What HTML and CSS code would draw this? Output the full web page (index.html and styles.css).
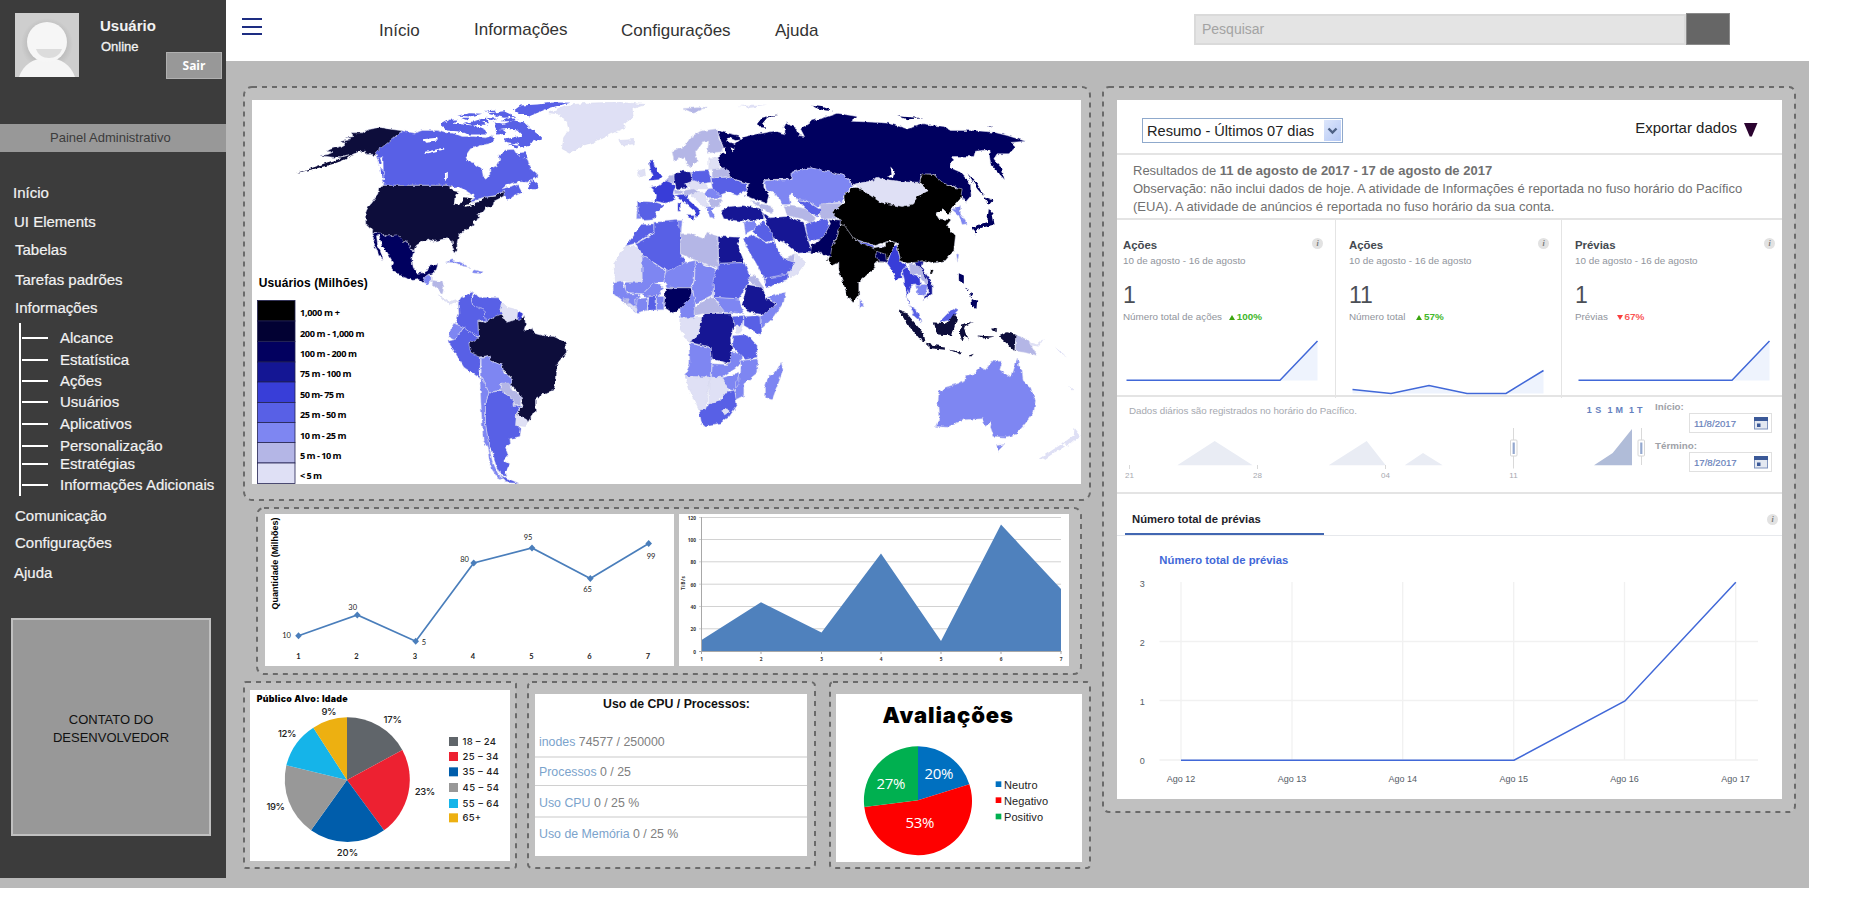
FILE: index.html
```html
<!DOCTYPE html>
<html lang="pt-BR">
<head>
<meta charset="utf-8">
<title>Painel Administrativo</title>
<link rel="stylesheet" href="styles.css">
</head>
<body>
<div class="app">
  <aside class="sidebar">
    <div class="profile">
      <svg class="avatar" viewBox="0 0 64 64">
        <defs><radialGradient id="av"><stop offset=".72" stop-color="#a8a8a8"/><stop offset="1" stop-color="#cecece"/></radialGradient></defs>
        <rect width="64" height="64" fill="#cecece"/>
        <circle cx="32" cy="31" r="26" fill="url(#av)" opacity=".45"/>
        <path d="M4 64C8 52 18 45 32 45S56 52 60 64Z" fill="#f5f5f5"/>
        <circle cx="32" cy="29" r="20" fill="#f6f6f6"/>
        <path d="M21 36H47C45 42 40 45 34 45S23 42 21 36Z" fill="#dcdcdc"/>
      </svg>
      <div class="who"><div class="name">Usuário</div><div class="state">Online</div></div>
      <button class="logout">Sair</button>
    </div>
    <div class="band">Painel Administrativo</div>
    <ul class="menu">
      <li class="m1">Início</li><li class="m2">UI Elements</li><li class="m3">Tabelas</li><li class="m4">Tarefas padrões</li>
      <li class="m5">Informações
        <ul class="sub">
          <li class="s1">Alcance</li><li class="s2">Estatística</li><li class="s3">Ações</li><li class="s4">Usuários</li><li class="s5">Aplicativos</li><li class="s6">Personalização</li><li class="s7">Estratégias</li><li class="s8">Informações Adicionais</li>
        </ul>
      </li>
      <li class="m6">Comunicação</li><li class="m7">Configurações</li><li class="m8">Ajuda</li>
    </ul>
    <div class="contact">CONTATO DO<br>DESENVOLVEDOR</div>
  </aside>

  <header class="topbar">
    <div class="burger"><i></i><i></i><i></i></div>
    <nav class="nav"><a class="n1">Início</a><a class="n2">Informações</a><a class="n3">Configurações</a><a class="n4">Ajuda</a></nav>
    <div class="search"><div class="search-box">Pesquisar</div><div class="search-btn"></div></div>
  </header>

  <main class="main">
    <div class="left">
      <section class="panel p-map">
        <svg class="frame"><rect rx="8"/></svg>
        <svg class="sheet" viewBox="252 100 829 384" width="829" height="384">
          <defs><filter id="coast" x="0" y="0" width="100%" height="100%"><feTurbulence type="fractalNoise" baseFrequency=".22" numOctaves="2" seed="4"/><feDisplacementMap in="SourceGraphic" scale="4" xChannelSelector="R" yChannelSelector="G"/></filter></defs>
          <g filter="url(#coast)">
          <g class="land" transform="translate(240.5 80.5) scale(.33333)">
            <g class="k2">
              <path d="M485 151 450 146 418 141 385 147 365 157 335 157 337 168 318 172 328 178 297 184 318 188 302 198 270 206 258 213 280 214 262 222 240 225 275 230 300 232 330 224 355 214 372 212 375 221 405 222 425 205Z"/>
              <path class="ns" d="M340 224 300 234 262 245 225 259 165 278 230 263 280 250 312 238Z"/>
              <path d="M434 314H620L650 325 678 327 655 334 644 350 640 372 660 348 685 342 700 345 690 370 720 362 735 350 765 347 780 333 790 330 793 345 775 355 760 362 758 375 735 382 725 395 712 400 718 412 700 420 698 435 672 450 655 465 650 485 650 510 644 518 637 500 635 480 620 475 600 478 582 482 565 478 545 483 527 495 520 510 510 505 500 482 488 485 475 475 468 465 440 467 420 460 398 455 385 440 376 432 374 400 385 375 412 340 415 322Z"/>
              <path d="M712 722 735 726 760 710 780 698 795 720 845 715 852 705 855 735 850 750 875 745 880 758 905 765 940 768 975 785 978 815 950 850 947 900 940 930 915 937 885 957 885 990 862 1025 830 1000 847 970 840 945 812 915 812 890 788 870 785 855 750 840 745 825 715 830 690 818 682 795 700 775 714 770Z"/>
            </g>
            <g class="k6">
              <path d="M485 151 520 158 545 150 590 150 610 157 640 158 665 168 700 168 735 172 755 165 760 178 745 190 720 195 690 205 676 225 680 240 700 248 715 257 724 265 728 290 738 296 748 280 748 265 770 255 778 240 775 225 790 215 800 208 820 207 828 220 838 232 862 235 870 262 890 280 888 292 862 305 830 304 800 312 785 325 812 318 828 310 835 318 845 336 800 357 790 345 793 330 780 333 765 345 735 350 715 355 690 368 704 348 675 330 650 325 620 314H434L425 300 432 280 415 255 408 225 405 215 440 188Z"/>
              <path class="ns" d="M862 322 875 298 892 312 895 326 875 326ZM755 125 790 130 820 120 850 125 870 145 890 160 905 175 890 182 880 178 868 195 845 202 830 190 800 185 790 178 815 172 845 165 830 150 800 145 770 150ZM598 133 625 118 648 117 640 130 700 135 735 150 740 162 690 162 650 152 620 150ZM820 90 840 75 890 72 940 66 990 67 955 75 920 85 895 95 865 108 840 100ZM650 105 690 98 725 100 690 108ZM700 122 735 112 770 115 745 125ZM740 98 790 92 825 108 790 112ZM780 122 800 112 835 116 810 122ZM830 218 855 215 862 232 840 236ZM670 128 715 120 740 132 700 134ZM765 148 790 150 800 160 770 162ZM660 112 688 112 680 119ZM728 92 765 86 758 94ZM802 190 835 196 826 204Z"/>
              <path d="M653 665 662 650 700 632 692 655 697 675 730 680 735 720 712 722 714 770 690 757 665 740 645 727 655 700Z"/>
              <path d="M692 655 705 640 715 650 770 652 785 665 778 690 785 700 760 710 735 726 730 685 697 676Z"/>
              <path d="M668 740 690 757 714 772 685 790 690 815 720 830 718 893 670 860 640 810 622 782 640 778 655 760Z"/>
              <path d="M745 937 778 930 818 955 818 975 842 973 828 1000 828 1030 842 1045 838 1068 808 1075 810 1090 795 1100 803 1125 790 1140 808 1150 795 1175 800 1185 780 1180 765 1150 755 1110 745 1095 735 1030 735 970ZM780 1185 835 1208 800 1207Z"/>
            </g>
            <path class="k3" d="M396 456 420 458 440 467 468 463 480 470 488 485 500 480 510 507 520 512 514 535 518 560 528 578 550 577 562 570 565 557 592 552 588 566 575 580 563 582 555 590 548 607 535 597 518 600 490 590 462 572 452 558 457 545 440 515 425 500 420 480 416 464 408 466 412 495 420 510 428 537 416 528 408 505 398 490 402 475Z"/>
            <path class="k7" d="M548 607 552 590 562 583 572 586 572 600 560 612ZM615 545 635 538 660 545 688 561 665 556 645 547ZM700 568 728 574 722 580 695 577ZM640 728 668 740 655 760 640 778 625 770 630 745ZM722 832 745 825 750 840 785 855 790 878 810 890 812 915 780 912 778 928 745 937 730 900 722 890ZM718 892 730 900 745 937 735 970 735 1030 745 1095 755 1140 775 1185 800 1205 770 1190 750 1160 740 1100 728 1080 722 980Z"/>
            <path class="k8" d="M572 600 605 603 610 620 606 640 595 630 585 620 575 612ZM778 928 785 908 805 908 815 930 842 945 840 972 818 972 818 955Z"/>
            <path class="k9" d="M594 643 610 655 625 665 645 658 658 668 640 665 628 673 610 662ZM785 665 800 680 830 688 832 715 800 725 785 700 778 690ZM828 998 862 1020 855 1038 825 1035ZM925 97 975 75 1040 68 1130 65 1215 72 1175 85 1178 110 1150 130 1155 140 1110 160 1060 185 1025 195 990 218 965 205 970 170 985 150 980 120 950 100ZM1135 180 1180 177 1178 190 1150 195 1138 188Z"/>
            <path class="k5" d="M832 690 848 700 838 720 830 712Z"/>
            <path class="sea" d="M545 176 590 172 592 180 555 184ZM550 215 610 202 612 206 560 218ZM613 280 622 274 622 295 615 302ZM625 322 650 318 680 330 660 335 635 330ZM640 372 655 345 700 340 702 355 672 350 655 375ZM668 375 705 366 702 372 675 379ZM735 110 750 140 740 165 760 158 765 130ZM410 228 428 232 430 300 420 290Z"/>
            <path class="k6 ns" d="M410 232 418 230 424 250 416 246ZM420 262 428 268 430 290 422 282Z"/>
          </g>
          <g class="land" transform="translate(640.5 80.5) scale(.33333)">
            <path class="k3" d="M230 150 295 165 298 178 285 180 265 172 258 182 285 190 305 172 325 165 400 152 435 160 430 140 440 125 470 145 475 165 492 168 480 145 515 120 550 112 590 98 650 108 630 122 700 125 745 128 800 145 850 130 910 138 930 150 1000 150 1060 155 1100 165 1155 182 1110 186 1125 200 1105 220 1070 220 1060 235 1085 265 1092 298 1050 250 1045 208 1005 212 1000 228 938 228 930 262 960 275 990 310 992 345 975 365 962 345 950 320 900 305 880 280 842 282 838 305 790 305 725 295 700 298 690 305 640 312 610 285 570 275 510 262 455 275 455 295 370 298 370 320 385 345 378 370 315 345 325 310 265 290 268 285 232 250 232 230 250 212 248 200Z"/>
            <path class="k3 ns" d="M350 130 365 112 415 100 380 112 365 130 378 142 360 140ZM512 76 550 80 582 92 540 88ZM770 107 850 113 800 116ZM980 278 1010 310 1030 348 1010 325ZM1040 138 1058 138 1048 142Z"/>
            <path class="sea" d="M750 258 762 272 757 290 740 292 753 280ZM555 335 590 333 570 342ZM245 205 255 200 256 222 247 218ZM270 200 282 206 276 215Z"/>
            <g class="k7">
              <path d="M370 300 455 297 455 275 510 262 570 275 610 285 640 315 610 345 605 365 560 368 530 380 500 360 470 358 456 340 445 345 450 372 425 372 405 340 378 330Z"/>
              <path d="M-10 372 5 375 2 415-12 415ZM200 325 235 322 245 350 205 355 190 340ZM195 378 225 378 215 390 225 415 208 410ZM310 425 345 420 350 440 315 460ZM105 420 125 420 122 455 110 445Z"/>
              <path d="M0 520 75 572 70 605 40 610 10 640-45 635-45 605 5 605ZM75 572 135 545 165 540 160 600 150 622 80 620 70 605ZM165 540 228 568 215 645 165 670 155 620 162 600ZM222 650 295 655 310 700 250 695ZM380 650 435 635 430 665 400 710 360 748 358 708 408 672ZM155 630 165 665 160 712 120 712 118 685Z"/>
              <path d="M-82 605-55 600-40 640 0 640-10 660-15 697-60 655-82 640ZM5 640 40 605 70 620 55 645 10 650ZM48 645H70V688H48ZM-15 655 22 652 20 690-12 697Z"/>
              <path d="M145 788 212 802 215 835 212 890 135 888 148 845ZM215 850 265 852 270 815 305 820 300 850 245 890 213 890ZM302 840 352 835 352 875 310 910 310 945 285 958 285 905 300 880ZM245 892 295 878 295 910 280 932 262 925ZM422 845 428 870 395 958 375 952 375 915 385 885 405 875Z"/>
              <path d="M825 615 862 610 855 645 832 642ZM935 388 960 375 960 400 980 430 965 432 955 405ZM658 655 670 675 658 685ZM948 520 955 522 951 545Z"/>
              <path d="M885 1038 895 1015 892 970 895 935 910 922 950 910 972 902 975 885 1000 880 1020 860 1035 868 1055 842 1085 842 1078 868 1112 892 1122 860 1130 830 1136 860 1145 870 1148 900 1170 920 1185 960 1180 995 1150 1035 1125 1062 1095 1070 1060 1068 1050 1040 1053 1022 1035 1038 1025 1015 970 1018 920 1040ZM1068 1095 1092 1092 1072 1112Z"/>
            </g>
            <g class="k6">
              <path d="M-10 362 45 365 70 373 50 395 40 418 10 420-5 400ZM152 272 205 270 212 305 180 310 155 300ZM212 292 260 290 320 310 320 330 290 345 260 335 235 345 215 320ZM470 358 500 362 535 385 560 378 545 395 530 410 495 385ZM495 430 530 420 560 415 568 435 545 475 505 482 498 455ZM345 440 370 420 395 455 400 480 375 485 335 455ZM308 475 335 462 380 488 400 485 430 535 465 545 455 575 420 588 370 592 345 545 320 505ZM370 595 445 578 440 600 378 622Z"/>
              <path d="M40 425 110 420 120 460 120 520 135 545 80 572 0 520-15 490 40 460ZM0 432 40 430 40 455-15 488-45 497-20 465ZM235 548 312 547 330 590 310 630 295 655 220 650 218 600ZM310 708 358 705 362 765 310 735ZM278 708 310 705 305 735 278 738ZM280 765 320 762 350 795 350 830 315 838 275 800ZM25 645 47 645 47 688 22 690ZM175 988 198 985 205 970 238 962 262 932 282 930 290 975 265 1010 240 1028 190 1037 182 1025Z"/>
              <path d="M808 675 830 690 842 725 822 708ZM895 725 935 685 955 690 925 720Z"/>
              <path d="M642 475 700 495 700 507 645 488Z"/>
            </g>
            <path class="k5" d="M25 240 38 238 42 255 50 270 63 288 55 298 25 300 38 285 30 268ZM85 300 105 318 98 340 102 360 75 368 45 362 48 340 28 320 55 315 75 300ZM100 345 145 338 140 355 175 385 178 400 164 412 165 395 120 355ZM112 367H120V392H112ZM138 405 162 405 158 418ZM740 548 755 505 768 492 780 540 800 558 785 570 785 595 765 598 755 570ZM785 565 800 560 820 585 838 590 840 612 810 615 800 650 812 680 802 665 795 620Z"/>
            <path class="k4" d="M100 285 120 270 150 275 155 300 140 325 108 325 100 300ZM365 395 385 412 440 408 490 425 500 470 515 515 470 518 430 485 400 475 380 430ZM240 392 265 378 310 375 365 385 370 415 300 422 250 415ZM232 468 300 470 290 490 312 545 235 548ZM320 612 365 620 380 655 408 672 370 703 325 695 305 670ZM190 698 275 700 280 735 270 775 275 805 265 850 215 835 212 800 145 785 170 770ZM820 542 850 540 845 560 875 610 875 640 850 658 865 630 860 600 830 560Z"/>
            <path class="k8" d="M75 300 95 280 100 285 102 310ZM215 265 255 262 270 288 215 292ZM130 330 160 325 175 335 130 345ZM205 358 243 355 240 375 210 378ZM95 212 135 195 150 170 180 152 230 145 235 175 248 200 242 214 200 218 205 182 190 182 165 215 170 240 150 262 138 250 132 230 100 240ZM430 375 460 378 495 385 525 412 510 430 485 415 440 405ZM540 370 605 368 580 395 590 415 540 415ZM330 362 395 378 395 400 365 385ZM430 535 462 520 460 545ZM120 460 150 460 190 475 200 455 232 468 233 565 155 535 120 520ZM325 590 345 585 372 625 330 610ZM160 680 215 648 250 690 245 695 185 700 162 705ZM805 548 835 555 862 600 855 615 838 585 810 580ZM1125 762 1165 780 1190 825 1150 815 1125 812ZM-52 655-38 655-36 672-50 670ZM100 328 128 332 124 340 102 340ZM128 84 200 80 160 98Z"/>
            <path class="k9" d="M-5 272 12 265 15 285-5 290ZM205 232 235 232 238 260 205 268ZM135 310 160 300 200 315 198 325 150 325ZM150 340 190 335 205 375 192 382ZM645 310 700 300 710 290 725 298 790 305 835 308 865 330 830 345 820 370 785 378 720 365 690 345 655 325ZM705 495H730V505H705ZM445 575 465 545 465 520 495 545 470 580 450 592ZM-45 497-15 497 5 520 5 605-75 600-80 550ZM118 715 185 710 170 770 145 785 118 745ZM-42 672-32 668-10 685-12 697ZM135 888 215 890 205 905 198 985 175 988 150 935ZM205 895 243 892 265 928 235 960 205 970ZM247 990 260 985 266 995 252 1003ZM288 740 306 735 300 755 288 755Z"/>
            <path class="k1" d="M635 320 655 322 690 345 720 365 785 378 820 370 830 347 865 330 838 305 845 280 880 282 905 305 940 320 965 325 960 355 940 378 925 400 910 385 886 400 895 415 932 418 918 435 945 465 940 510 915 540 880 548 850 540 830 545 800 548 780 540 770 490 750 480 705 495 640 475 600 430 595 418 575 395 612 365 610 345 640 320ZM868 567 880 565 876 578 867 577Z"/>
            <path class="k1" d="M595 432 612 435 640 475 700 505 735 498 735 485 765 485 745 530 735 545 705 545 700 565 655 605 655 645 638 667 620 645 595 570 595 545 575 555 560 540 575 495 592 465Z"/>
            <path class="k3" d="M75 622 155 622 150 650 120 685 98 698 70 680ZM510 518 515 490 545 475 570 430 565 418 600 422 592 465 575 495 570 525 550 528 540 512ZM705 512 735 520 738 545 712 542Z"/>
            <path class="k3 ns" d="M955 578 970 585 970 610 955 600ZM990 655 1010 660 1008 685 992 678ZM975 622 985 628 978 634ZM988 635 998 640 992 650ZM1045 385 1056 400 1062 432 1030 440 1008 445 1005 465 993 440 1040 425ZM1030 350 1058 360 1045 372ZM1040 362 1050 370 1040 372Z"/>
            <path class="k2 ns" d="M775 690 800 700 850 760 855 785 835 775 800 730ZM855 790 910 798 915 808 870 803ZM925 808 965 814 962 822ZM880 726 920 728 940 700 950 710 935 765 890 762ZM958 755 962 735 1000 725 970 742 985 780 972 768 965 785ZM1075 768 1100 755 1125 762 1122 812 1100 790ZM1050 745 1070 743 1068 755ZM1010 765 1060 768 1030 774ZM985 825 1000 820 990 830Z"/>
            <path class="k9 ns" d="M1195 1135 1265 1090 1270 1098 1210 1138ZM1265 1090 1300 1064 1302 1042 1320 1065 1285 1095ZM1165 785 1190 792 1210 775 1195 798 1170 795ZM1283 915 1298 928 1294 930ZM1240 798 1280 828 1255 815ZM290 76 380 76 330 82Z"/>
          </g>
          </g>
          <text class="map-title" x="258.700" y="287" textLength="109">Usuários (Milhões)</text>
          <g class="scale">
            <rect class="k1" x="257.500" y="300.500" width="37.500" height="20.500"/><rect class="kl" x="257.500" y="321" width="37.500" height="20.300"/><rect class="k3" x="257.500" y="341.500" width="37.500" height="20.500"/><rect class="k4" x="257.500" y="362" width="37.500" height="20"/><rect class="k5" x="257.500" y="382" width="37.500" height="20.500"/><rect class="k6" x="257.500" y="402.500" width="37.500" height="20"/><rect class="k7" x="257.500" y="422.500" width="37.500" height="20"/><rect class="k8" x="257.500" y="442.500" width="37.500" height="20.500"/><rect class="k9" x="257.500" y="463" width="37.500" height="20.500"/>
          </g>
          <g class="scale-t">
            <text x="300" y="316.300" textLength="40">1,000 m +</text><text x="300" y="336.500" textLength="64.500">200 m - 1,000 m</text><text x="300" y="357" textLength="57">100 m - 200 m</text><text x="300" y="377.300" textLength="51.500">75 m - 100 m</text><text x="300" y="397.700" textLength="44.500">50 m- 75 m</text><text x="300" y="418" textLength="46.500">25 m - 50 m</text><text x="300" y="438.500" textLength="46.500">10 m - 25 m</text><text x="300" y="458.700" textLength="41.500">5 m - 10 m</text><text x="300" y="479" textLength="22">&lt; 5 m</text>
          </g>
        </svg>
      </section>

      <section class="panel p-duo">
        <svg class="frame"><rect rx="7"/></svg>
        <svg class="sheet" viewBox="265 514 409 152" width="409" height="152">
          <text class="ylab" transform="translate(278 609.500) rotate(-90)" textLength="92">Quantidade (Milhões)</text>
          <polyline points="298.500,635.700 357.300,615 415.700,641.300 473.700,563 532,548 590.300,578.500 648.700,543.500" fill="none" stroke="#4a7ebb" stroke-width="1.700"/>
          <g fill="#4a7ebb"><path id="d" d="M298.500 632.200l3.300 3.500-3.300 3.500-3.300-3.500z"/><use href="#d" x="58.800" y="-20.700"/><use href="#d" x="117.200" y="5.600"/><use href="#d" x="175.200" y="-72.700"/><use href="#d" x="233.500" y="-87.700"/><use href="#d" x="291.800" y="-57.200"/><use href="#d" x="350.200" y="-92.200"/></g>
          <g class="pt"><text x="286.500" y="637.500">10</text><text x="352.700" y="610">30</text><text x="424" y="645">5</text><text x="464.500" y="561.500">80</text><text x="528" y="540">95</text><text x="587.500" y="592">65</text><text x="651" y="559">99</text></g>
          <g class="pt dark"><text x="298.500" y="659">1</text><text x="356.500" y="659">2</text><text x="415" y="659">3</text><text x="473" y="659">4</text><text x="531.500" y="659">5</text><text x="589.500" y="659">6</text><text x="648" y="659">7</text></g>
        </svg>
        <svg class="sheet" viewBox="679 514 390 152" width="390" height="152">
          <path d="M699 517.500H1061M699 539.500H1061M699 561.800H1061M699 584.200H1061M699 606.500H1061M699 628.800H1061" stroke="#d2d2d2"/>
          <path d="M701.500 640 761 602.300 821.500 632.500 881 553.500 941 641 1001 524.500 1061 589V651.500H701.500Z" fill="#4f81bd"/>
          <path d="M701.500 517V654M699 651.500H1061.500M761 651V654M821.500 651V654M881 651V654M941 651V654M1001 651V654M1061 651V654" stroke="#a8a8a8" fill="none"/>
          <text class="tiny" transform="translate(684.500 590) rotate(-90)" textLength="14">TiB/s</text>
          <g class="tiny end"><text x="696" y="519.500">120</text><text x="696" y="541.500">100</text><text x="696" y="564">80</text><text x="696" y="586.500">60</text><text x="696" y="608.700">40</text><text x="696" y="631">20</text><text x="696" y="653.700">0</text></g>
          <g class="tiny mid"><text x="701.500" y="661">1</text><text x="761" y="661">2</text><text x="821.500" y="661">3</text><text x="881" y="661">4</text><text x="941" y="661">5</text><text x="1001" y="661">6</text><text x="1061" y="661">7</text></g>
        </svg>
      </section>

      <div class="trio">
        <section class="panel p-age">
          <svg class="frame"><rect rx="2"/></svg>
          <svg class="sheet" viewBox="250 690 260 171" width="260" height="171">
            <g transform="translate(240 670) scale(.33333)">
              <path d="M321 330V142A188 188 0 0 1 487 240Z" fill="#60656a"/><path d="M321 330 487 240A188 188 0 0 1 432 481Z" fill="#ed2131"/><path d="M321 330 432 481A188 188 0 0 1 213 481Z" fill="#005dab"/><path d="M321 330 213 481A188 188 0 0 1 139 286Z" fill="#989898"/><path d="M321 330 139 286A188 188 0 0 1 220 173Z" fill="#15b4e9"/><path d="M321 330 220 173A188 188 0 0 1 321 142Z" fill="#edb011"/>
              <rect x="627" y="201" width="27" height="27" fill="#60656a"/><rect x="627" y="246" width="27" height="27" fill="#ed2131"/><rect x="627" y="292" width="27" height="27" fill="#005dab"/><rect x="627" y="339" width="27" height="27" fill="#989898"/><rect x="627" y="387" width="27" height="27" fill="#15b4e9"/><rect x="627" y="430" width="27" height="27" fill="#edb011"/>
            </g>
            <text class="heavy" x="256.700" y="702.300" textLength="91">Público Alvo: Idade</text>
            <g class="pie-t"><text x="321.500" y="715" textLength="15">9%</text><text x="383.500" y="723" textLength="18.500">17%</text><text x="278" y="737" textLength="18.500">12%</text><text x="414.700" y="795" textLength="20.500">23%</text><text x="266.500" y="810" textLength="18.500">19%</text><text x="336.700" y="856" textLength="21.500">20%</text>
            <text x="462.500" y="745" textLength="33.500">18 – 24</text><text x="462.500" y="760" textLength="36">25 – 34</text><text x="462.500" y="775" textLength="36.500">35 – 44</text><text x="462.500" y="791" textLength="36.500">45 – 54</text><text x="462.500" y="806.500" textLength="36.500">55 – 64</text><text x="462.500" y="821" textLength="18.500">65+</text></g>
          </svg>
        </section>
        <section class="panel p-cpu">
          <svg class="frame"><rect rx="4"/></svg>
          <div class="sheet cpu">
            <h3>Uso de CPU / Processos:</h3>
            <div class="row r1"><b>inodes</b> 74577 / 250000</div>
            <div class="row r2"><b>Processos</b> 0 / 25</div>
            <div class="row r3"><b>Uso CPU</b> 0 / 25 %</div>
            <div class="row r4"><b>Uso de Memória</b> 0 / 25 %</div>
          </div>
        </section>
        <section class="panel p-rate">
          <svg class="frame"><rect rx="3"/></svg>
          <svg class="sheet" viewBox="836 694 246 168" width="246" height="168">
            <g transform="translate(660 670) scale(.33333)">
              <path d="M774 391V229A162 162 0 0 1 928 343Z" fill="#0070c0"/><path d="M774 391 928 343A162 162 0 1 1 613 411Z" fill="#fe0000"/><path d="M774 391 613 411A162 162 0 0 1 774 229Z" fill="#00b050"/>
              <rect x="1007" y="334" width="17" height="17" fill="#0070c0"/><rect x="1007" y="382" width="17" height="17" fill="#fe0000"/><rect x="1007" y="431" width="17" height="17" fill="#00b050"/>
            </g>
            <text class="heavy big" x="882.500" y="722.500" textLength="130.500">Avaliações</text>
            <g class="chalk"><text x="924.500" y="778.500" textLength="29">20%</text><text x="876.500" y="788.500" textLength="29">27%</text><text x="905.500" y="828" textLength="29">53%</text></g>
            <g class="leg"><text x="1004" y="788.500" textLength="33.500">Neutro</text><text x="1004" y="804.500" textLength="44">Negativo</text><text x="1004" y="820.500" textLength="39">Positivo</text></g>
          </svg>
        </section>
      </div>
    </div>

    <section class="panel p-stats">
      <svg class="frame"><rect rx="6"/></svg>
      <div class="sheet stats">
        <div class="bar">
          <div class="select">Resumo - Últimos 07 dias<span class="arrow"><svg width="17" height="21" viewBox="0 0 17 21"><path d="M4.500 8.500l4 4 4-4" fill="none" stroke="#4d6185" stroke-width="2.400"/></svg></span></div>
          <div class="export">Exportar dados<svg width="14" height="14" viewBox="0 0 14 14"><path d="M0 0H13.500L7.800 13.500H5.700Z" fill="#2b0330"/></svg></div>
        </div>
        <p class="note">Resultados de <b>11 de agosto de 2017 - 17 de agosto de 2017</b><br>Observação: não inclui dados de hoje. A atividade de Informações é reportada no fuso horário do Pacífico<br>(EUA). A atividade de anúncios é reportada no fuso horário da sua conta.</p>
        <div class="cards">
          <div class="card first"><h4>Ações<i class="info">i</i></h4><div class="when">10 de agosto - 16 de agosto</div><div class="num">1</div><div class="lab">Número total de ações <span class="up">100%</span></div>
            <svg class="spark" width="196" height="57"><path d="M157 41.500 194.500 2V41.500Z" fill="#eef3fd"/><path d="M3.500 41.200H157L194.500 2" class="ln"/></svg></div>
          <div class="card"><h4>Ações<i class="info">i</i></h4><div class="when">10 de agosto - 16 de agosto</div><div class="num">11</div><div class="lab">Número total <span class="up u2">57%</span></div>
            <svg class="spark" width="196" height="57"><path d="M3.500 50.500 42 54.500 80 46.500 118 54.500H157L194.500 31.500V54.500H3.500Z" fill="#eef3fd"/><path d="M3.500 50.500 42 54.500 80 46.500 118 54.500H157L194.500 31.500" class="ln"/></svg></div>
          <div class="card last"><h4>Prévias<i class="info">i</i></h4><div class="when">10 de agosto - 16 de agosto</div><div class="num">1</div><div class="lab">Prévias <span class="down">67%</span></div>
            <svg class="spark" width="196" height="57"><path d="M157 41.500 194.500 2V41.500Z" fill="#eef3fd"/><path d="M3.500 41.200H157L194.500 2" class="ln"/></svg></div>
        </div>
        <div class="history">
          <svg viewBox="1117 397 533 95" width="533" height="95">
            <text class="hist-note" x="1129" y="413.500" textLength="228">Dados diários são registrados no horário do Pacífico.</text>
            <path d="M1177.300 465.300 1214.700 441 1252.700 465.300ZM1328.700 465.300 1366.700 441 1385.700 465.300ZM1404.700 465.300 1423 453 1442.700 465.300Z" fill="#e9ecf4"/>
            <path d="M1594 465.300 1612.700 453 1632 429V465.300Z" fill="#b0bcd8"/>
            <path d="M1129.500 465V469M1257.500 465V469M1385.500 465V469M1513.500 428V468.500M1641.500 428V465" stroke="#d9d9d9"/>
            <g fill="#fff" stroke="#d6d6d6"><rect x="1510.500" y="440" width="6.500" height="16" rx="1"/><rect x="1638" y="440" width="6.500" height="16" rx="1"/></g>
            <path d="M1513.700 442.500V454M1641.300 442.500V454" stroke="#94a8cf" stroke-width="2.200"/>
            <g class="hist-x"><text x="1129.500" y="477.500">21</text><text x="1257.500" y="477.500">28</text><text x="1385.500" y="477.500">04</text><text x="1513.500" y="477.500">11</text></g>
            <g class="ranges"><text x="1586.800" y="413.300" textLength="14.500">1 S</text><text x="1607.500" y="413.300" textLength="15.500">1 M</text><text x="1629" y="413.300" textLength="13.500">1 T</text></g>
          </svg>
          <div class="dates">
            <label>Início:</label><div class="date">11/8/2017<svg width="14" height="13" viewBox="0 0 14 13"><rect x=".5" y=".5" width="13" height="11.500" fill="#e3e8f1" stroke="#7f93bd"/><rect width="14" height="4" fill="#3b5998"/><rect x="3" y="6.500" width="3.500" height="3.500" fill="#3b5998"/></svg></div>
            <label>Término:</label><div class="date">17/8/2017<svg width="14" height="13" viewBox="0 0 14 13"><rect x=".5" y=".5" width="13" height="11.500" fill="#e3e8f1" stroke="#7f93bd"/><rect width="14" height="4" fill="#3b5998"/><rect x="3" y="6.500" width="3.500" height="3.500" fill="#3b5998"/></svg></div>
          </div>
        </div>
        <div class="tabs"><div class="tab">Número total de prévias</div><i class="info">i</i></div>
        <svg class="chart" viewBox="1117 536 665 263" width="665" height="263">
          <path d="M1181 582V760M1292 582V760M1402.700 582V760M1513.700 582V760M1624.500 582V760M1735.700 582V760M1159.500 641.500H1758M1159.500 700.500H1758M1159.500 760H1758" stroke="#f1f1f1" stroke-width="1.300"/>
          <path d="M1181 760.200H1514L1625 701 1735.800 582.300" class="ln"/>
          <text class="ctitle" x="1159.300" y="564" textLength="129">Número total de prévias</text>
          <g class="ax"><text x="1142.300" y="586.500">3</text><text x="1142.300" y="645.500">2</text><text x="1142.300" y="704.800">1</text><text x="1142.300" y="764">0</text>
          <text x="1181" y="782">Ago 12</text><text x="1292" y="782">Ago 13</text><text x="1402.700" y="782">Ago 14</text><text x="1513.700" y="782">Ago 15</text><text x="1624.500" y="782">Ago 16</text><text x="1735.500" y="782">Ago 17</text></g>
        </svg>
      </div>
    </section>
  </main>
</div>
</body>
</html>
```
FILE: styles.css
```css
* { box-sizing: border-box; }
html, body { margin: 0; background: #fff; }
body { font-family: "Liberation Sans", Arial, sans-serif; overflow: hidden; }
ul { list-style: none; margin: 0; padding: 0; }
h3, h4, p { margin: 0; }
svg { display: block; }

.app {
  display: grid;
  grid-template-columns: 226px 1583px;
  grid-template-rows: 61px 827px;
  width: 1809px;
  height: 888px;
  background: #b9b9b9;
}

/* sidebar */
.sidebar { grid-row: 1 / 3; height: 878px; background: #3c3c3c; color: #f2f2f2; }
.profile { display: grid; grid-template-columns: 64px 1fr; column-gap: 21px; height: 124px; padding: 13px 0 0 15px; position: relative; }
.avatar { width: 64px; height: 64px; }
.name { font-weight: bold; font-size: 15px; line-height: 18px; margin-top: 4px; }
.state { font-size: 13px; line-height: 16px; margin: 4px 0 0 1px; -webkit-text-stroke: .3px #f2f2f2; }
.logout { position: absolute; left: 166px; top: 52px; width: 56px; height: 27px; padding: 0; border: 1px solid #b0b0b0; background: #989898; color: #fff; font: bold 12px "Open Sans", sans-serif; }
.band { height: 28px; line-height: 27px; padding-left: 50px; background: #989898; color: #3c3c3c; font-size: 13px; }
.menu { height: 465.500px; padding-top: 32px; font-size: 15px; line-height: 18px; -webkit-text-stroke: .2px #f2f2f2; }
.m1 { padding-left: 13px; }
.m2 { padding-left: 14px; margin-top: 11px; }
.m3 { padding-left: 15px; margin-top: 10px; }
.m4 { padding-left: 15px; margin-top: 12px; }
.m5 { padding-left: 15px; margin-top: 10px; }
.m6 { padding-left: 15px; margin-top: 12px; }
.m7 { padding-left: 15px; margin-top: 9px; }
.m8 { padding-left: 14px; margin-top: 12px; }
.sub { margin: 6px 0 -1px 4px; padding: 6px 0 1px; border-left: 2px solid #fff; height: 173px; }
.sub li { display: flex; align-items: center; height: 18px; white-space: nowrap; }
.sub li::before { content: ""; width: 26px; height: 2px; margin: 0 12px 0 1px; background: #fff; flex: none; }
.s2, .s5, .s6 { margin-top: 4px; }
.s3, .s4, .s8 { margin-top: 3px; }
.contact { width: 200px; height: 218px; margin-left: 11px; padding-top: 91px; border: 2px solid #c0c0c0; background: #989898; color: #111; text-align: center; font-size: 13px; line-height: 18px; }

/* top bar */
.topbar { display: flex; background: #fff; color: #333; }
.burger { width: 20px; margin: 18px 0 0 16px; }
.burger i { display: block; height: 2px; margin-bottom: 5.500px; background: #1d2d82; }
.nav { display: flex; width: 815px; margin-left: 115px; font-size: 17px; line-height: 20px; padding-top: 21px; }
.n1 { width: 97px; padding-left: 2px; }
.n2 { width: 147px; margin-top: -1px; }
.n3 { width: 154px; }
.search { display: flex; margin-left: 2px; padding-top: 13px; }
.search-box { width: 492px; height: 31px; margin-top: 1px; padding-left: 6px; border: 2px solid #dadada; background: #e4e4e4; color: #a3a3a3; font-size: 14px; line-height: 27px; }
.search-btn { width: 44px; height: 32px; background: #666; border: 1px solid #8a8a8a; }

/* panels */
.main { display: flex; gap: 11px; padding: 25px 0 0 17px; }
.left { display: flex; flex-direction: column; gap: 6px; width: 848px; }
.panel { position: relative; }
.frame { position: absolute; inset: 0; width: 100%; height: 100%; }
.frame rect { x: 1px; y: 1px; width: calc(100% - 2px); height: calc(100% - 2px); fill: #c0c0c0; stroke: #6a6a6a; stroke-width: 2; stroke-dasharray: 5 5; }
.sheet { position: relative; background: #fff; flex: none; }
.p-map { height: 415px; padding: 14px 0 0 9px; }
.p-duo { display: flex; gap: 5px; width: 826px; height: 168px; margin-left: 13px; padding: 7px 0 0 9px; }
.trio { display: flex; height: 188px; }
.p-age { width: 274px; padding: 9px 0 0 7px; }
.p-cpu { width: 289px; margin-left: 10px; padding: 13px 0 0 8px; }
.p-rate { width: 262px; margin-left: 13px; padding: 13px 0 0 7px; }
.p-stats { width: 694px; height: 727px; padding: 14px 0 0 15px; }

/* map */
.land path { stroke: #d5d7ee; stroke-width: 1.600; }
.land .ns { stroke: none; }
.land .sea { fill: #fff; stroke: none; }
.k1 { fill: #000; }
.kl { fill: #020133; }
.k2 { fill: #0b0b3b; }
.k3 { fill: #02005f; }
.k4 { fill: #141694; }
.k5 { fill: #383ed8; }
.k6 { fill: #5860e6; }
.k7 { fill: #7e86f2; }
.k8 { fill: #b4b6e6; }
.k9 { fill: #dfe0f5; }
.scale rect { stroke: #222250; stroke-width: .8; }
.map-title { font-size: 12px; font-weight: bold; }
.scale-t { font: bold 9.200px "Open Sans", "Noto Sans", sans-serif; }

/* small charts */
.ylab { font-size: 9px; font-weight: bold; }
.pt { font: 7.500px Lato, sans-serif; text-anchor: middle; fill: #222; }
.dark { font-weight: bold; }
.tiny { font: bold 4.800px "Open Sans", sans-serif; fill: #333; }
.end { text-anchor: end; }
.mid { text-anchor: middle; }
.heavy { font: 900 8.800px Inter, sans-serif; }
.big { font-size: 22px; }
.pie-t { font: 500 9.500px Inter, sans-serif; fill: #222; }
.chalk { font: 15px "Open Sans", sans-serif; fill: #fff; }
.leg { font-size: 11px; fill: #222; }

.cpu { width: 272px; height: 162px; color: #808080; font-size: 12.350px; }
.cpu h3 { height: 32px; padding-left: 68px; color: #111; font-size: 12.300px; line-height: 20px; white-space: nowrap; }
.row { padding-left: 4px; border-bottom: 1px solid #d0d0d0; }
.row b { color: #7ba3cc; font-weight: normal; }
.r1 { height: 32px; line-height: 33px; border-bottom: 2px solid #e4e4e4; }
.r2 { height: 28px; line-height: 29px; }
.r3 { height: 32px; line-height: 34px; border-bottom: 2px solid #e4e4e4; }
.r4 { line-height: 32px; border: 0; }

/* statistics */
.stats { width: 665px; height: 699px; display: flex; flex-direction: column; }
.bar { display: flex; justify-content: space-between; height: 55px; padding: 18px 24px 0 25px; border-bottom: 2px solid #e4e4e4; }
.select { display: flex; width: 201px; height: 25px; padding-left: 4px; border: 1px solid #8fa9cc; color: #222; font-size: 14.600px; line-height: 24px; white-space: nowrap; }
.arrow { margin: 1px 1px 1px auto; width: 17px; height: 21px; background: linear-gradient(135deg, #dde6fb, #b4c8f5); }
.export { display: flex; gap: 7px; color: #222; font-size: 15px; line-height: 20px; }
.export svg { margin-top: 5px; }
.note { height: 65px; padding: 7px 0 0 16px; border-bottom: 2px solid #e4e4e4; color: #707070; font-size: 13px; line-height: 18px; white-space: nowrap; }
.cards { display: grid; grid-template-columns: 219px 226px 220px; height: 177px; border-bottom: 2px solid #e4e4e4; }
.card { height: 178px; padding: 18px 0 0 13px; border-right: 1px solid #e4e4e4; }
.card.first { padding-left: 6px; }
.card.last { border: 0; }
.card h4 { display: flex; justify-content: space-between; width: 200px; color: #444950; font-size: 11.400px; line-height: 14px; }
.info { width: 11px; height: 11px; border-radius: 50%; background: #e2e2e2; color: #777; font: italic bold 8px/11px "Liberation Serif", serif; text-align: center; }
.when { margin-top: 3px; color: #90949c; font-size: 9.850px; line-height: 12px; }
.num { margin-top: 15px; color: #4b4f56; font-size: 23px; line-height: 26px; }
.lab { margin-top: 3px; color: #90949c; font-size: 9.850px; line-height: 12px; }
.up, .down { margin-left: 4px; color: #42b72a; font-weight: bold; }
.u2 { margin-left: 8px; }
.down { color: #fa3e3e; font-weight: normal; margin-left: 6px; -webkit-text-stroke: .2px #fa3e3e; }
.up::before, .down::before { content: ""; display: inline-block; margin-right: 2px; border: 3.500px solid transparent; }
.up::before { border-top: 0; border-bottom: 5px solid #3ba50f; }
.down::before { border-bottom: 0; border-top: 5px solid #fa3e3e; }
.spark { margin-top: 16px; }
.ln { fill: none; stroke: #4168d8; stroke-width: 1.500; }
.history { display: flex; height: 97px; border-bottom: 2px solid #e4e4e4; }
.hist-note { font-size: 9.800px; fill: #a6a9b0; }
.hist-x { font-size: 8px; fill: #a6a9b0; text-anchor: middle; }
.ranges { font-size: 9px; font-weight: bold; fill: #6480be; }
.dates { padding: 4px 0 0 5px; color: #a0a2a8; font-size: 9.800px; font-weight: bold; }
.dates label { display: block; height: 12px; line-height: 12px; }
.date { display: flex; justify-content: space-between; width: 83px; height: 20px; margin: 0 0 7px 34px; padding: 2px 3px 0 4px; border: 1px solid #e0e0e0; color: #6982bb; font-size: 9.600px; font-weight: normal; line-height: 15px; -webkit-text-stroke: .2px #6982bb; }
.date svg { margin-top: 1px; }
.tabs { display: flex; justify-content: space-between; height: 42px; padding: 0 4px 0 8px; border-bottom: 1px solid #e6e8ec; }
.tab { width: 199px; height: 41px; padding: 18px 0 0 7px; border-bottom: 2px solid #4267b2; color: #1d2129; font-size: 11.300px; font-weight: bold; line-height: 14px; white-space: nowrap; }
.tabs .info { margin-top: 20px; }
.ctitle { font-size: 11.300px; font-weight: bold; fill: #4168d8; }
.ax { font-size: 9px; fill: #555c66; text-anchor: middle; }
```
